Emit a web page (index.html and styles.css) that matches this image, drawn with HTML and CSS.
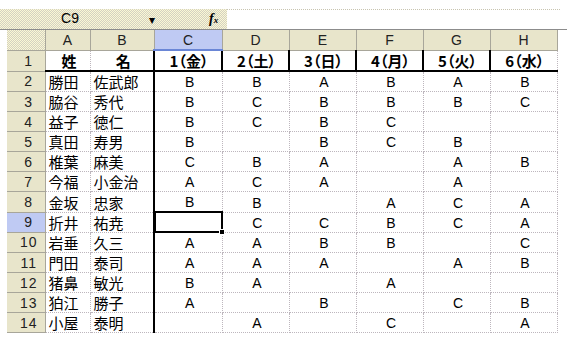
FILE: index.html
```html
<!DOCTYPE html>
<html lang="ja">
<head>
    <meta charset="UTF-8">
    <title>出席表</title>
    <link rel="stylesheet" href="styles.css">
</head>
<body>
    <div class="formula-row">
        <div class="name-box">C9</div>
        <div class="name-drop">▾</div>
        <div class="fx"><i>f</i><span>x</span></div>
        <div class="formula-input"></div>
    </div>

    <table class="sheet">
        <colgroup>
            <col class="c-rh"><col class="c-a"><col class="c-b"><col class="c-c">
            <col class="c-d"><col class="c-d"><col class="c-d"><col class="c-d"><col class="c-d">
        </colgroup>
        <thead>
            <tr>
                <th class="corner"></th>
                <th>A</th><th>B</th><th class="sel">C</th><th>D</th><th>E</th><th>F</th><th>G</th><th>H</th>
            </tr>
        </thead>
        <tbody>
            <tr class="title-row"><th>1</th><td class="name">姓</td><td class="name">名</td><td class="day">1（金）</td><td class="day">2（土）</td><td class="day">3（日）</td><td class="day">4（月）</td><td class="day">5（火）</td><td class="day">6（水）</td></tr>
            <tr><th>2</th><td>勝田</td><td>佐武郎</td><td class="day">B</td><td>B</td><td>A</td><td>B</td><td>A</td><td>B</td></tr>
            <tr><th>3</th><td>脇谷</td><td>秀代</td><td class="day">B</td><td>C</td><td>B</td><td>B</td><td>B</td><td>C</td></tr>
            <tr><th>4</th><td>益子</td><td>徳仁</td><td class="day">B</td><td>C</td><td>B</td><td>C</td><td></td><td></td></tr>
            <tr><th>5</th><td>真田</td><td>寿男</td><td class="day">B</td><td></td><td>B</td><td>C</td><td>B</td><td></td></tr>
            <tr><th>6</th><td>椎葉</td><td>麻美</td><td class="day">C</td><td>B</td><td>A</td><td></td><td>A</td><td>B</td></tr>
            <tr><th>7</th><td>今福</td><td>小金治</td><td class="day">A</td><td>C</td><td>A</td><td></td><td>A</td><td></td></tr>
            <tr><th>8</th><td>金坂</td><td>忠家</td><td class="day">B</td><td>B</td><td></td><td>A</td><td>C</td><td>A</td></tr>
            <tr><th class="sel">9</th><td>折井</td><td>祐尭</td><td class="day active"><span class="handle"></span></td><td>C</td><td>C</td><td>B</td><td>C</td><td>A</td></tr>
            <tr><th>10</th><td>岩垂</td><td>久三</td><td class="day">A</td><td>A</td><td>B</td><td>B</td><td></td><td>C</td></tr>
            <tr><th>11</th><td>門田</td><td>泰司</td><td class="day">A</td><td>A</td><td>A</td><td></td><td>A</td><td>B</td></tr>
            <tr><th>12</th><td>猪鼻</td><td>敏光</td><td class="day">B</td><td>A</td><td></td><td>A</td><td></td><td></td></tr>
            <tr><th>13</th><td>狛江</td><td>勝子</td><td class="day">A</td><td></td><td>B</td><td></td><td>C</td><td>B</td></tr>
            <tr><th>14</th><td>小屋</td><td>泰明</td><td class="day"></td><td>A</td><td></td><td>C</td><td></td><td>A</td></tr>
        </tbody>
    </table>
</body>
</html>
```

FILE: styles.css
```css
:root {
    --dither: repeating-conic-gradient(#fbf8d4 0 25%, #d4d1c2 0 50%) 0 0 / 2px 2px;
    --dither-blue: repeating-conic-gradient(#d4dcfa 0 25%, #aab8ec 0 50%) 0 0 / 2px 2px;
    --grid: #bdb6bd;
    --font: "Noto Sans CJK JP", "Liberation Sans", sans-serif;
}

* {
    margin: 0;
    padding: 0;
    box-sizing: border-box;
}

body {
    background: #fff;
    font-family: var(--font);
    color: #000;
    padding-top: 9px;
}

.formula-row {
    display: flex;
    height: 21px;
    border-bottom: 1px solid #8c8c8c;
}

.name-box {
    width: 140px;
    background: var(--dither);
    text-align: center;
    font-family: "Liberation Sans", sans-serif;
    font-size: 14px;
    line-height: 19px;
}

.name-drop {
    width: 24px;
    background: var(--dither);
    font-size: 12px;
    line-height: 19px;
    text-align: center;
}

.fx {
    width: 63px;
    background: var(--dither);
    font-family: "Liberation Serif", serif;
    font-weight: bold;
    font-size: 14px;
    line-height: 19px;
    padding-left: 45px;
}

.fx span {
    font-size: 9px;
    font-style: italic;
}

.formula-input {
    flex: 1;
    border-top: 1px dotted #c8c4b0;
    margin-right: 7px;
}

.sheet {
    margin-left: 7px;
    border-collapse: collapse;
    table-layout: fixed;
    width: 550px;
}

.c-rh { width: 38px; }
.c-a { width: 45px; }
.c-b { width: 64px; }
.c-c { width: 68px; }
.c-d { width: 67px; }

.sheet th {
    background: var(--dither);
    font-weight: normal;
    font-family: "Liberation Sans", sans-serif;
    font-size: 14px;
    color: #222;
    border-right: 1px solid #a8a69a;
    border-bottom: 1px solid #a8a69a;
}

.sheet thead th {
    height: 20px;
    padding-top: 1px;
}

.sheet thead th.sel {
    background: var(--dither-blue);
    border-bottom: 2px solid #6a86d6;
}

.sheet tbody th.sel {
    background: var(--dither-blue);
}

.sheet tbody th {
    text-align: center;
    padding-left: 6px;
    letter-spacing: 1px;
}

.sheet td {
    height: 20px;
    line-height: 18px;
    padding: 1px 0 0 3px;
    vertical-align: bottom;
    border-right: 1px dotted var(--grid);
    border-bottom: 1px dotted var(--grid);
    text-align: center;
    font-family: "Liberation Sans", sans-serif;
    font-size: 14px;
}

.sheet td:nth-child(2),
.sheet td:nth-child(3) {
    text-align: left;
    font-family: var(--font);
    font-size: 15px;
    padding-left: 3px;
}

.sheet td.day {
    border-left: 2px solid #000;
}

.title-row th,
.title-row td {
    height: 17px;
}

.title-row td {
    border-bottom: 2px solid #000;
    font-weight: bold;
    font-family: var(--font);
}

.sheet .title-row td.name {
    text-align: center;
    font-size: 15px;
}

.title-row td.day {
    font-size: 15px;
    font-feature-settings: "palt";
    padding-left: 2px;
    border-left: 2px solid #000;
}

.sheet td.active {
    position: relative;
    border: 2px solid #000;
    border-left-width: 3px;
}

.handle {
    position: absolute;
    right: -4px;
    bottom: -4px;
    width: 6px;
    height: 6px;
    background: #000;
    border: 1px solid #fff;
}
```
